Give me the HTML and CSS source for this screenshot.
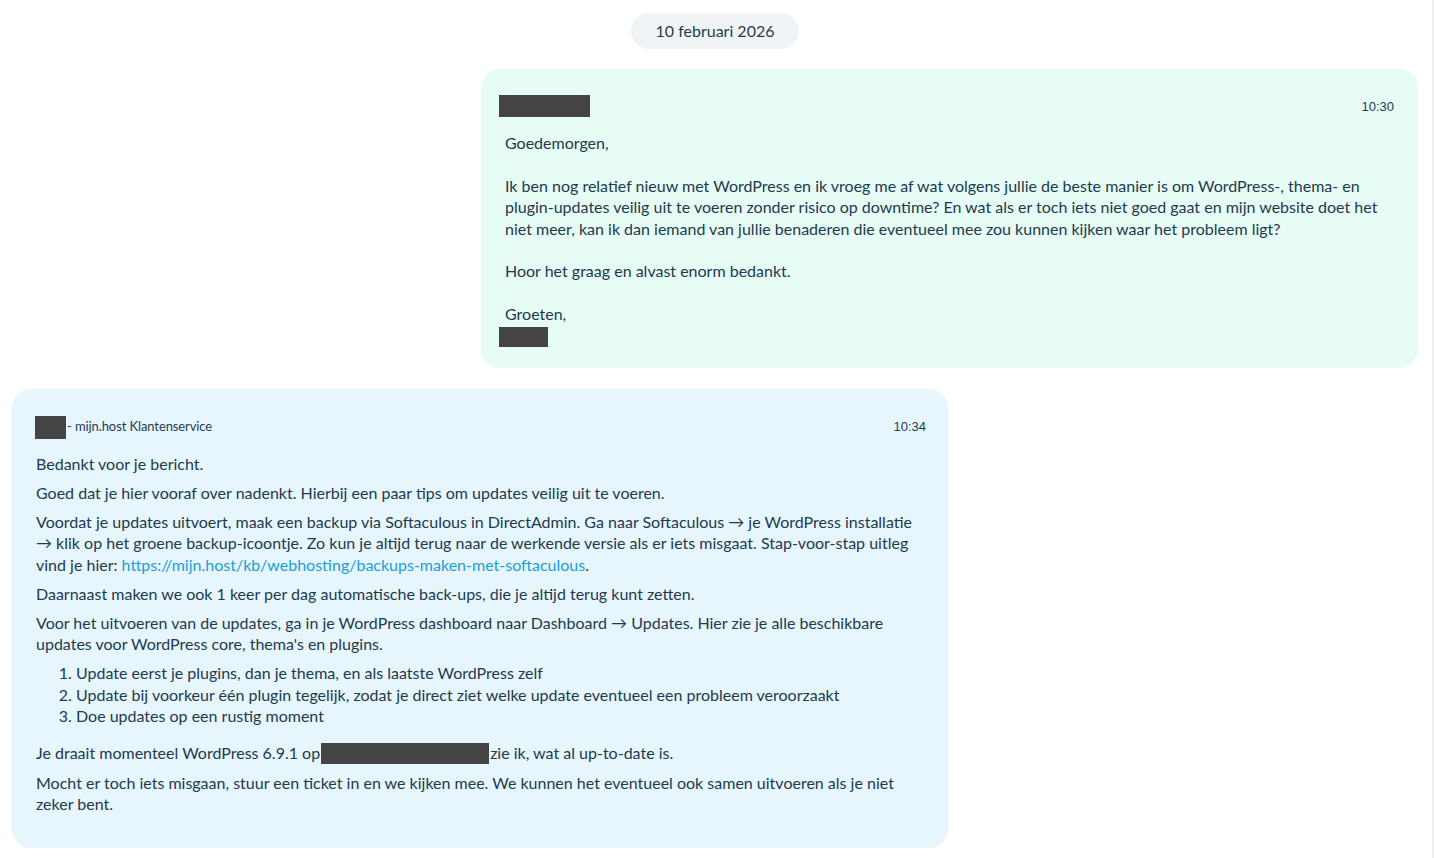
FILE: index.html
```html
<!DOCTYPE html>
<html lang="nl">
<head>
  <meta charset="UTF-8">
  <title>Ticket - mijn.host</title>
  <link rel="stylesheet" href="styles.css">
</head>
<body>

  <div class="chat">

    <!-- datum -->
    <div class="day">
      <span class="day-pill">10 februari 2026</span>
    </div>

    <!-- bericht klant -->
    <div class="msg msg-customer">
      <div class="msg-head">
        <span class="redact redact-name"></span>
        <span class="time">10:30</span>
      </div>
      <div class="msg-text">Goedemorgen,

Ik ben nog relatief nieuw met WordPress en ik vroeg me af wat volgens jullie de beste manier is om WordPress-, thema- en plugin-updates veilig uit te voeren zonder risico op downtime? En wat als er toch iets niet goed gaat en mijn website doet het niet meer, kan ik dan iemand van jullie benaderen die eventueel mee zou kunnen kijken waar het probleem ligt?

Hoor het graag en alvast enorm bedankt.

Groeten,
<span class="redact redact-sign"></span></div>
    </div>

    <!-- antwoord klantenservice -->
    <div class="msg msg-support">
      <div class="msg-head">
        <span class="sender"><span class="redact redact-agent"></span>- mijn.host Klantenservice</span>
        <span class="time">10:34</span>
      </div>
      <div class="msg-body">
        <p>Bedankt voor je bericht.</p>
        <p>Goed dat je hier vooraf over nadenkt. Hierbij een paar tips om updates veilig uit te voeren.</p>
        <p>Voordat je updates uitvoert, maak een backup via Softaculous in DirectAdmin. Ga naar Softaculous → je WordPress installatie → klik op het groene backup-icoontje. Zo kun je altijd terug naar de werkende versie als er iets misgaat. Stap-voor-stap uitleg vind je hier: <a href="#">https://mijn.host/kb/webhosting/backups-maken-met-softaculous</a>.</p>
        <p>Daarnaast maken we ook 1 keer per dag automatische back-ups, die je altijd terug kunt zetten.</p>
        <p>Voor het uitvoeren van de updates, ga in je WordPress dashboard naar Dashboard → Updates. Hier zie je alle beschikbare updates voor WordPress core, thema's en plugins.</p>
        <ol>
          <li>Update eerst je plugins, dan je thema, en als laatste WordPress zelf</li>
          <li>Update bij voorkeur één plugin tegelijk, zodat je direct ziet welke update eventueel een probleem veroorzaakt</li>
          <li>Doe updates op een rustig moment</li>
        </ol>
        <p>Je draait momenteel WordPress 6.9.1 op<span class="redact redact-site"></span>zie ik, wat al up-to-date is.</p>
        <p>Mocht er toch iets misgaan, stuur een ticket in en we kijken mee. We kunnen het eventueel ook samen uitvoeren als je niet zeker bent.</p>
      </div>
    </div>

  </div>

</body>
</html>
```

FILE: styles.css
```css
body {
  margin: 0;
  background: #fff;
  font-family: 'Lato', sans-serif;
  color: #1d3a4e;
}

.chat {
  width: 1434px;
  height: 858px;
  box-sizing: border-box;
  padding: 13px 14px 0 12px;
  border-right: 2px solid #eeeeee;
  display: flex;
  flex-direction: column;
  overflow: hidden;
}

.day {
  display: flex;
  justify-content: center;
  margin-bottom: 20px;
}

.day-pill {
  width: 168px;
  height: 36px;
  line-height: 36px;
  text-align: center;
  border-radius: 18px;
  background: #f1f4f6;
  font-size: 16px;
  color: #1f3d52;
}

.msg {
  box-sizing: border-box;
  border-radius: 20px;
  box-shadow: 0 0 3px rgba(0, 0, 0, 0.04);
}

.msg-customer {
  align-self: flex-end;
  width: 937px;
  background: #e6fcf4;
  padding: 26px 24px 21px 18px;
  margin-bottom: 21px;
}

.msg-support {
  align-self: flex-start;
  width: 936px;
  background: #e7f6fd;
  padding: 26px 22px 33px 23px;
}

.msg-head {
  display: flex;
  justify-content: space-between;
  align-items: center;
}

.time {
  font-family: 'Liberation Sans', Arial, sans-serif;
  font-size: 13px;
  color: #23404f;
}

.msg-customer .msg-head {
  margin-bottom: 15px;
}

.msg-text {
  white-space: pre-wrap;
  font-size: 16px;
  line-height: 21.4px;
  padding-left: 6px;
}

.redact {
  display: inline-block;
  background: #444444;
  vertical-align: top;
}

.redact-name {
  width: 91px;
  height: 22px;
}

.redact-sign {
  width: 49px;
  height: 20px;
  margin-left: -6px;
  margin-top: 2px;
}

.redact-agent {
  width: 31px;
  height: 23px;
  vertical-align: middle;
  margin-right: 1px;
}

.redact-site {
  width: 168px;
  height: 21px;
  vertical-align: -5px;
  margin-left: 1px;
  margin-right: 1px;
}

.sender {
  font-size: 13px;
  letter-spacing: -0.1px;
  color: #1f3d52;
  margin-top: 1px;
}

.msg-support .msg-head {
  margin-bottom: 14px;
}

.msg-body {
  font-size: 16px;
  line-height: 21.5px;
  padding-left: 1px;
}

.msg-body p {
  margin: 0 0 7.5px;
}

.msg-body p:last-child {
  margin-bottom: 0;
}

.msg-body ol {
  margin: 0 0 15.5px;
  padding-left: 40px;
}

.msg-body a {
  color: #1a9fd9;
  text-decoration: none;
}
```
